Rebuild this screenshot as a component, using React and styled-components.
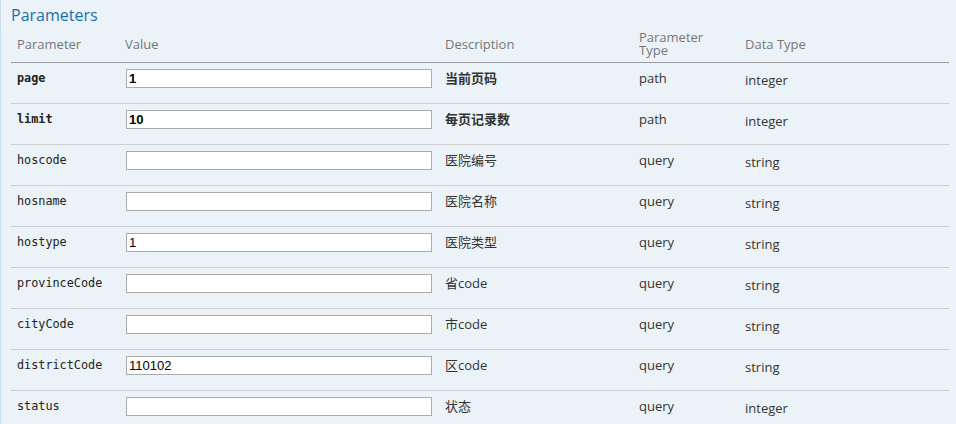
import React from "react";
import styled, { createGlobalStyle } from "styled-components";

const GlobalStyle = createGlobalStyle`
  html, body {
    margin: 0;
    padding: 0;
    background: #ebf3f9;
  }
`;

const Panel = styled.div`
  width: 956px;
  height: 424px;
  box-sizing: border-box;
  background: #ebf3f9;
  border-left: 1px solid #c9dff1;
  padding: 3px 0 0 10px;
  overflow: hidden;
  font-family: "Open Sans", "Noto Sans", "Noto Sans CJK SC", sans-serif;
`;

const Heading = styled.h4`
  margin: 0;
  font-size: 16px;
  line-height: 24px;
  font-weight: 400;
  color: #1a6db5;
`;

const Table = styled.table`
  width: 938px;
  border-collapse: collapse;
  table-layout: fixed;
`;

const HeadCell = styled.th`
  width: ${(props) => props.$w}px;
  height: 35px;
  box-sizing: border-box;
  padding: 0 6px 0 6px;
  text-align: left;
  vertical-align: middle;
  font-size: 13px;
  line-height: 13.5px;
  font-weight: 400;
  color: #777;
  border-bottom: 1px solid #9a9a9a;
`;

const Row = styled.tr`
  border-bottom: 1px solid #cfcfcf;
`;

const Cell = styled.td`
  height: 41px;
  box-sizing: border-box;
  padding: 7px 6px 0 6px;
  vertical-align: top;
  font-size: 13px;
  line-height: 17px;
  color: #333;
  font-weight: ${(props) => (props.$bold ? 700 : 400)};
`;

const Code = styled.code`
  display: block;
  padding-top: 1px;
  font-family: "DejaVu Sans Mono", "Liberation Mono", monospace;
  font-size: 11.8px;
  line-height: 15px;
  color: #222;
  font-weight: ${(props) => (props.$bold ? 700 : 400)};
`;

const Input = styled.input`
  display: block;
  width: 306px;
  height: 19px;
  box-sizing: border-box;
  margin: -1px 0 0 1px;
  padding: 0 2px;
  border: 1px solid #aaa;
  background: #fff;
  font-family: "Liberation Sans", Arial, sans-serif;
  font-size: 13px;
  color: #000;
  font-weight: ${(props) => (props.$bold ? 700 : 400)};
  outline: none;
`;

const TypeText = styled.span`
  display: block;
  margin-top: ${(props) => (props.$shift ? 2 : 0)}px;
`;

const params = [
  { name: "page", value: "1", desc: "当前页码", type: "path", data: "integer", req: true },
  { name: "limit", value: "10", desc: "每页记录数", type: "path", data: "integer", req: true },
  { name: "hoscode", value: "", desc: "医院编号", type: "query", data: "string" },
  { name: "hosname", value: "", desc: "医院名称", type: "query", data: "string" },
  { name: "hostype", value: "1", desc: "医院类型", type: "query", data: "string" },
  { name: "provinceCode", value: "", desc: "省code", type: "query", data: "string" },
  { name: "cityCode", value: "", desc: "市code", type: "query", data: "string" },
  { name: "districtCode", value: "110102", desc: "区code", type: "query", data: "string" },
  { name: "status", value: "", desc: "状态", type: "query", data: "integer" },
];

const App = () => (
  <>
    <GlobalStyle />
    <Panel>
      <Heading>Parameters</Heading>
      <Table>
        <thead>
          <tr>
            <HeadCell $w={108}>Parameter</HeadCell>
            <HeadCell $w={320}>Value</HeadCell>
            <HeadCell $w={194}>Description</HeadCell>
            <HeadCell $w={106}>
              Parameter
              <br />
              Type
            </HeadCell>
            <HeadCell $w={210}>Data Type</HeadCell>
          </tr>
        </thead>
        <tbody>
          {params.map((p) => (
            <Row key={p.name}>
              <Cell>
                <Code $bold={p.req}>{p.name}</Code>
              </Cell>
              <Cell>
                <Input $bold={p.req} defaultValue={p.value} />
              </Cell>
              <Cell $bold={p.req}>{p.desc}</Cell>
              <Cell>{p.type}</Cell>
              <Cell>
                <TypeText $shift>{p.data}</TypeText>
              </Cell>
            </Row>
          ))}
        </tbody>
      </Table>
    </Panel>
  </>
);

export default App;
